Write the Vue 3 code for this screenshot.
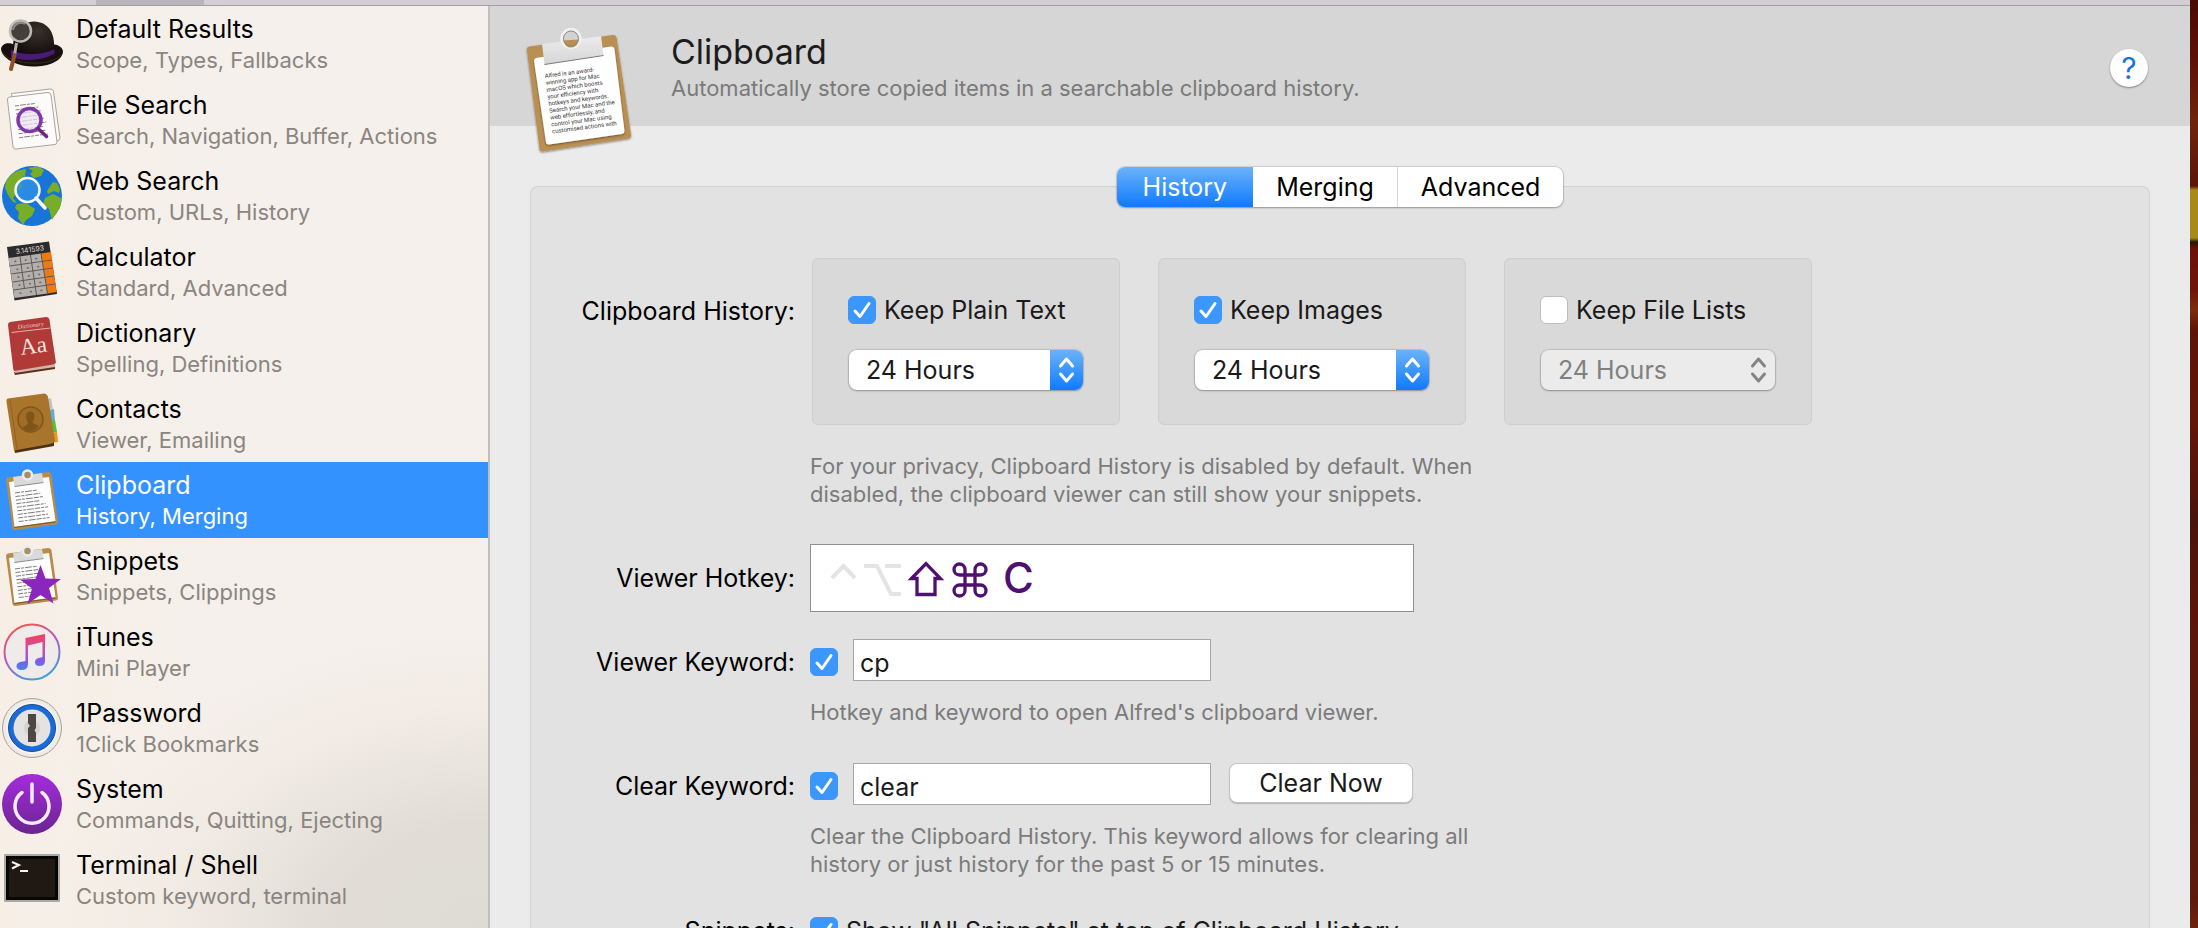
<script setup>
import { ref } from 'vue'

const sections = [
  { id: 'default', title: 'Default Results', detail: 'Scope, Types, Fallbacks' },
  { id: 'file', title: 'File Search', detail: 'Search, Navigation, Buffer, Actions' },
  { id: 'web', title: 'Web Search', detail: 'Custom, URLs, History' },
  { id: 'calculator', title: 'Calculator', detail: 'Standard, Advanced' },
  { id: 'dictionary', title: 'Dictionary', detail: 'Spelling, Definitions' },
  { id: 'contacts', title: 'Contacts', detail: 'Viewer, Emailing' },
  { id: 'clipboard', title: 'Clipboard', detail: 'History, Merging' },
  { id: 'snippets', title: 'Snippets', detail: 'Snippets, Clippings' },
  { id: 'itunes', title: 'iTunes', detail: 'Mini Player' },
  { id: 'password', title: '1Password', detail: '1Click Bookmarks' },
  { id: 'system', title: 'System', detail: 'Commands, Quitting, Ejecting' },
  { id: 'terminal', title: 'Terminal / Shell', detail: 'Custom keyword, terminal' },
]
const current = ref('clipboard')

const tabs = ['History', 'Merging', 'Advanced']
const activeTab = ref('History')

const stores = ref([
  { id: 'text', label: 'Keep Plain Text', on: true, period: '24 Hours' },
  { id: 'images', label: 'Keep Images', on: true, period: '24 Hours' },
  { id: 'files', label: 'Keep File Lists', on: false, period: '24 Hours' },
])
const periods = ['24 Hours', '7 Days', '1 Month', '3 Months']

const viewerOn = ref(true)
const viewerKeyword = ref('cp')
const clearOn = ref(true)
const clearKeyword = ref('clear')
const snippetsOn = ref(true)

const note = [
  'Alfred is an award-',
  'winning app for Mac',
  'macOS which boosts',
  'your efficiency with',
  'hotkeys and keywords.',
  'Search your Mac and the',
  'web effortlessly, and',
  'control your Mac using',
  'customised actions with',
]
const lineWidths = [22, 25, 27, 24, 29, 31, 27, 30, 31]
</script>

<template>
  <div class="desktop">
    <div class="window">
      <div class="toolbar"><span class="toolbar-item"></span></div>
      <div class="body">
        <nav class="sidebar">
          <a
            v-for="s in sections"
            :key="s.id"
            href="#"
            class="row"
            :class="{ selected: s.id === current }"
            @click.prevent="current = s.id"
          >
            <svg class="icon" viewBox="0 0 64 64" aria-hidden="true">
              <g v-if="s.id === 'default'">
                <defs>
                  <radialGradient id="crown" cx="0.6" cy="0.3" r="0.8">
                    <stop offset="0" stop-color="#3a302a" /><stop offset="1" stop-color="#0c0908" />
                  </radialGradient>
                </defs>
                <path d="M1 37C2 31 9 30 15 33L52 32C60 33 63 36 63 40C62 49 48 55 32 54.500C15 54 2 46 1 37Z" fill="#17100e" />
                <path d="M13 40C12 20 20 10 34 9.500C48 10 55 20 54 37C46 44 22 46 13 40Z" fill="url(#crown)" />
                <path d="M11 38C22 44 44 43 54 37L55 41C44 49 22 50 11 45Z" fill="#4a1a78" />
                <path d="M3 41C10 52 50 56 61 43" fill="none" stroke="#3c2a22" stroke-width="1" />
                <path d="M16.500 31L14 46" stroke="#b9b2ab" stroke-width="3" />
                <path d="M14.500 43L11 57" stroke="#92511f" stroke-width="4" stroke-linecap="round" />
                <circle cx="20.500" cy="19" r="10.500" fill="#453f3b" stroke="#bdbab8" stroke-width="2.500" />
                <path d="M13 18A8 8 0 0 1 25 12" fill="none" stroke="#8f8b88" stroke-width="2" />
              </g>
              <g v-else-if="s.id === 'file'">
                <path d="M11.500 5.500L50 1Q53 .5 53.500 3.500L60 50Q60 52 58 52.500L19 58Z" fill="#fbf8f6" stroke="#a9a3a0" stroke-width="1" />
                <path d="M9.500 9L48 4.500Q50.500 4.500 51 7L57 54Q57 56 55 56.500L16 61Q13.500 61.500 13 59L7.500 12Q7 9.500 9.500 9Z" fill="#fdfbfa" stroke="#a9a3a0" stroke-width="1" />
                <g transform="translate(15 18) rotate(-7.500)" stroke="#8a8382" stroke-width="1">
                  <path v-for="(w, i) in lineWidths" :key="i" :d="`M${0} ${i * 4}H${w - 2}`" stroke-dasharray="4 1 6 1 3 1" />
                </g>
                <circle cx="29.500" cy="32" r="11.500" fill="#ede2f2" fill-opacity=".7" stroke="#8038a8" stroke-width="3.500" />
                <path d="M38 40.500L46.500 48.500" stroke="#6b2684" stroke-width="3.500" stroke-linecap="round" />
              </g>
              <g v-else-if="s.id === 'web'">
                <circle cx="32" cy="32" r="30" fill="#1974d8" />
                <path d="M6 17Q11 9 20 6L25 8L22 12L28 14L20 19L23 23L17 28L13 34L17 39L13 38L8 31L5 24Z" fill="#78ae27" />
                <path d="M28 4L38 2.500L44 6L41 12L34 14L30 10L33 7ZM21 6L26 5L25 13L21 11Z" fill="#78ae27" />
                <path d="M17 40L26 39L35 45L32 52L26 56L23 61L18 54L19 48L15 44Z" fill="#78ae27" />
                <path d="M47 27L53 18L57 19L60 25L59 29L54 27L48 30ZM45 34L53 30L61 34Q62 43 57 48L52 56L49 45L43 40Z" fill="#78ae27" />
                <circle cx="27.500" cy="26" r="12" fill="#2d91e5" fill-opacity=".8" stroke="#f8fafc" stroke-width="2.500" />
                <path d="M36 34L45 44" stroke="#f8fafc" stroke-width="3.500" stroke-linecap="round" />
              </g>
              <g v-else-if="s.id === 'calculator'">
                <path d="M7 7L49 1.500L57 54L14.500 60.500Z" fill="#2c2a2a" />
                <path d="M8.500 18L41 13.500L47.500 53.500L14.500 58Z" fill="#b3afad" />
                <path d="M41 13.500L51 12L56.500 52L47.500 53.500Z" fill="#f07a10" />
                <g stroke="#5f5a58" stroke-width="1">
                  <path d="M9.500 26L52 20M11 34L53 28M12.500 42L54 36M13.500 50L55 44" />
                  <path d="M20 16.500L24.500 49M30.500 15L36.500 55M41 13.500L47.500 53.500" />
                </g>
                <g transform="translate(11 19) rotate(-7.500)" stroke="#6b6664" stroke-width="1.500" stroke-dasharray="2 8.500">
                  <path d="M3 3H32M4 11H32M4 19H32M4 27H32M4 35H32" />
                </g>
                <text x="16" y="14" transform="rotate(-7.500 16 14)" class="digits">3.141593</text>
              </g>
              <g v-else-if="s.id === 'dictionary'">
                <path d="M14 56L55 48V53L15 59Z" fill="#5d2c22" />
                <path d="M14 54L55 47.500V51L15 57Z" fill="#cfb7a4" />
                <path d="M10 6L46 1Q49 1 49.500 4L56 47Q53 49 50 49L14 55Q13 53 13 51L8 9Q8 6.500 10 6Z" fill="#b03a38" />
                <path d="M11.500 16.500L50.500 12" stroke="#e3b3aa" stroke-width="1" />
                <text x="18" y="13" transform="rotate(-7.500 18 13)" class="book-name">Dictionary</text>
                <text x="21" y="39" transform="rotate(-7.500 21 39)" class="book-aa">Aa</text>
              </g>
              <g v-else-if="s.id === 'contacts'">
                <path d="M46 7L51 6L53 18L47 19Z" fill="#c2c0bd" />
                <path d="M48 19L54 17L55 29L49 30Z" fill="#63aecb" />
                <path d="M49 30L55 28L57 40L50 41Z" fill="#55bf42" />
                <path d="M50 41L57 40L58 50L52 51Z" fill="#e9951d" />
                <path d="M14 57L54 50V54L15 61Z" fill="#4c3213" />
                <path d="M8 6.500L44 1.500Q47 1.500 48 5L55 49Q53 52 50 52L14 58.500L6.500 10Q6 7 8 6.500Z" fill="#a9752c" />
                <path d="M10 7L17 57" stroke="#936222" stroke-width="1" />
                <circle cx="30.500" cy="27.500" r="12.500" fill="#a06c26" stroke="#80551c" stroke-width="1.500" />
                <path d="M30 19.500Q34.500 19.500 34.500 24Q34.500 28 32.500 29.500Q33 32 39 33.500Q35 39 30.500 39Q25 39 22.500 35Q28 33 28 30.500Q26 28 26 24Q26 20 30 19.500Z" fill="#80551c" />
              </g>
              <g v-else-if="s.id === 'clipboard' || s.id === 'snippets'">
                <path d="M8 9.500L48 4Q51 4 51.500 6.500L58 54Q58 56 56 56.500L15 62Q13 62 12.500 60L6 12Q6 10 8 9.500Z" fill="#b88b4a" />
                <path d="M9 14L49 9L55.500 53L14.500 59Z" fill="#fdfdfd" />
                <path d="M14 59.500L55.500 54" stroke="#77572d" stroke-width="1" />
                <path d="M13 9L42 5L43.500 14L14.500 18.500Z" fill="#d9dadb" />
                <path d="M14.500 18.500L43.500 14.500" stroke="#8a8a8a" stroke-width="1" />
                <circle cx="27.500" cy="7" r="4.500" fill="#a98f66" stroke="#ececec" stroke-width="2.500" />
                <g transform="translate(15 25) rotate(-7.500)" stroke="#7d7d7d" stroke-width="1">
                  <path v-for="(w, i) in lineWidths" :key="i" :d="`M${0} ${i * 3.600}H${w}`" stroke-dasharray="5 1 3 1 7 1" />
                </g>
                <path
                  v-if="s.id === 'snippets'"
                  d="M40.500 21L45.500 34.500L61 35L49 44L53.500 59.500L40.500 51L27.500 60L32 44.500L20 35.500L35.500 35Z"
                  fill="#8b26bd"
                />
              </g>
              <g v-else-if="s.id === 'itunes'">
                <defs>
                  <linearGradient id="ring" x1="0.300" y1="0" x2="0.700" y2="1">
                    <stop offset="0" stop-color="#ef5a50" /><stop offset=".45" stop-color="#b55bc4" /><stop offset="1" stop-color="#38a5d6" />
                  </linearGradient>
                  <linearGradient id="note" gradientUnits="userSpaceOnUse" x1="34" y1="14" x2="34" y2="50">
                    <stop offset="0" stop-color="#f5405a" /><stop offset=".45" stop-color="#c650ae" /><stop offset=".75" stop-color="#7d5ce8" /><stop offset="1" stop-color="#4387ee" />
                  </linearGradient>
                </defs>
                <circle cx="32" cy="32" r="27.500" fill="#eeebea" stroke="url(#ring)" stroke-width="2" />
                <path
                  d="M25.500 18L45 14V41Q45 46 39.500 46Q35 46 35 42Q35 38 41 37.500L42.500 37V22L28 25.500V44Q28 50 21.500 50Q16.500 50 16.500 46Q16.500 42 23 41.500L25.500 41Z"
                  fill="url(#note)"
                />
              </g>
              <g v-else-if="s.id === 'password'">
                <circle cx="32" cy="32" r="29.500" fill="#eeeae5" stroke="#aaa39c" stroke-width="1" />
                <circle cx="32" cy="32" r="26" fill="#f4f1ee" />
                <circle cx="32" cy="32" r="21" fill="#e5e3e1" stroke="#1a6bd8" stroke-width="5" />
                <circle cx="32" cy="32" r="23.500" fill="none" stroke="#164a9a" stroke-width="1" />
                <circle cx="32" cy="32" r="8" fill="#d5d2cf" />
                <path d="M28 18H36V32L34.500 34L36 37V46H28V32L30 30L28 27Z" fill="#4c4743" />
              </g>
              <g v-else-if="s.id === 'system'">
                <defs>
                  <linearGradient id="power" x1="0" y1="0" x2="0" y2="1">
                    <stop offset="0" stop-color="#a62bdc" /><stop offset="1" stop-color="#6a2590" />
                  </linearGradient>
                </defs>
                <circle cx="32" cy="32" r="30" fill="url(#power)" />
                <path d="M22 20.500A17 17 0 1 0 42 20.500M32 12V30" fill="none" stroke="#f5ecf8" stroke-width="3.500" stroke-linecap="round" />
              </g>
              <g v-else>
                <rect x="4" y="6" width="56" height="48" rx="1" fill="#a7aaa5" />
                <rect x="6" y="8" width="52" height="44" fill="#080706" />
                <rect x="9" y="11" width="46" height="38" fill="#1f1813" />
                <path d="M12 14L19 17L12 20.500" fill="none" stroke="#f6f6f6" stroke-width="2" />
                <path d="M20 23H28" stroke="#f6f6f6" stroke-width="2" />
              </g>
            </svg>
            <span class="row-text">
              <span class="row-title">{{ s.title }}</span>
              <span class="row-detail">{{ s.detail }}</span>
            </span>
          </a>
        </nav>

        <main class="main">
          <header class="header">
            <svg class="header-icon" viewBox="0 0 120 140" aria-hidden="true">
              <defs>
                <linearGradient id="plate" x1="0" y1="0" x2="0" y2="1">
                  <stop offset="0" stop-color="#ececec" /><stop offset="1" stop-color="#d6d6d6" />
                </linearGradient>
                <filter id="shade" x="-10%" y="-10%" width="120%" height="120%">
                  <feDropShadow dx="0" dy="1" stdDeviation="1.200" flood-color="#000" flood-opacity=".45" />
                </filter>
              </defs>
              <path d="M9.500 26.500L93 15Q96 14.500 96.500 17.500L111 115Q111 118 108.500 118.500L23 131.500Q20 132 19.500 129L7 30Q6.500 27 9.500 26.500Z" fill="#b98f52" filter="url(#shade)" />
              <path d="M16 38L91 26.500Q94 26 94.500 29L104.500 111Q104.500 113.500 102 114L29 124.500Q26.500 125 26 122.500L14 41Q14 38.500 16 38Z" fill="#fff" filter="url(#shade)" />
              <path d="M22 24L81 16L83.500 35L24.500 44.500Z" fill="url(#plate)" />
              <path d="M24.500 44.500L83.500 35.500" stroke="#777" stroke-width="1" />
              <circle cx="51" cy="18.500" r="9" fill="#d2d2d2" stroke="#f0f0f0" stroke-width="3.500" />
              <path d="M43.500 20.500L58.500 19.500A7.500 7.500 0 0 1 43.500 20.500Z" fill="#b98f52" />
              <circle cx="51" cy="18.500" r="7.500" fill="none" stroke="#858585" stroke-width="1" />
              <g transform="translate(25 58) rotate(-7.500)" class="note-text">
                <text v-for="(line, i) in note" :key="i" x="0" :y="i * 7">{{ line }}</text>
              </g>
            </svg>
            <div class="heading">
              <h1>Clipboard</h1>
              <p>Automatically store copied items in a searchable clipboard history.</p>
            </div>
            <button type="button" class="help" aria-label="Help">?</button>
          </header>

          <section class="panel">
            <div class="tabs" role="tablist">
              <button
                v-for="t in tabs"
                :key="t"
                type="button"
                role="tab"
                :aria-selected="t === activeTab"
                :class="{ active: t === activeTab }"
                @click="activeTab = t"
              >{{ t }}</button>
            </div>

            <form class="form" @submit.prevent>
              <div class="field history">
                <span class="label">Clipboard History:</span>
                <div class="cards">
                  <div v-for="c in stores" :key="c.id" class="card">
                    <label class="check">
                      <span class="box"><input v-model="c.on" type="checkbox" /><svg viewBox="0 0 28 28" aria-hidden="true"><path d="M7 15L12 20.500L21 7.500" /></svg></span>
                      {{ c.label }}
                    </label>
                    <div class="select" :class="{ off: !c.on }">
                      <select v-model="c.period" :disabled="!c.on" :aria-label="c.label + ' for'">
                        <option v-for="p in periods" :key="p">{{ p }}</option>
                      </select>
                      <svg viewBox="0 0 32 40" aria-hidden="true"><path d="M10 16L16 9L22 16M10 24L16 31L22 24" /></svg>
                    </div>
                  </div>
                </div>
              </div>
              <p class="hint privacy">For your privacy, Clipboard History is disabled by default. When<br />disabled, the clipboard viewer can still show your snippets.</p>

              <div class="field hotkey-row">
                <span id="hotkey-label" class="label">Viewer Hotkey:</span>
                <button type="button" class="hotkey" aria-labelledby="hotkey-label">
                  <svg viewBox="0 0 160 40" aria-hidden="true">
                    <g fill="none" stroke="#e4e4e4" stroke-width="4">
                      <path d="M2 20L13.500 8L25 20" />
                      <path d="M34 8H47L61 36H71M55 8H71" />
                    </g>
                    <g fill="none" stroke="#50106f" stroke-width="3.300">
                      <path d="M81.500 20.500L96 5.500L110.500 20.500H105V36.500H87V20.500Z" />
                      <path d="M135 17V11.500A5.500 5.500 0 1 0 129.500 17H150.500A5.500 5.500 0 1 0 145 11.500V32.500A5.500 5.500 0 1 0 150.500 27H129.500A5.500 5.500 0 1 0 135 32.500Z" />
                    </g>
                  </svg>
                  <span>C</span>
                </button>
              </div>

              <div class="field keyword">
                <label class="label" for="viewer-keyword">Viewer Keyword:</label>
                <span class="box"><input v-model="viewerOn" type="checkbox" aria-label="Use viewer keyword" /><svg viewBox="0 0 28 28" aria-hidden="true"><path d="M7 15L12 20.500L21 7.500" /></svg></span>
                <input id="viewer-keyword" v-model="viewerKeyword" class="text" type="text" />
              </div>
              <p class="hint single">Hotkey and keyword to open Alfred's clipboard viewer.</p>

              <div class="field keyword">
                <label class="label" for="clear-keyword">Clear Keyword:</label>
                <span class="box"><input v-model="clearOn" type="checkbox" aria-label="Use clear keyword" /><svg viewBox="0 0 28 28" aria-hidden="true"><path d="M7 15L12 20.500L21 7.500" /></svg></span>
                <input id="clear-keyword" v-model="clearKeyword" class="text" type="text" />
                <button type="button" class="push">Clear Now</button>
              </div>
              <p class="hint clearing">Clear the Clipboard History. This keyword allows for clearing all<br />history or just history for the past 5 or 15 minutes.</p>

              <div class="field">
                <span class="label">Snippets:</span>
                <label class="check">
                  <span class="box"><input v-model="snippetsOn" type="checkbox" /><svg viewBox="0 0 28 28" aria-hidden="true"><path d="M7 15L12 20.500L21 7.500" /></svg></span>
                  Show "All Snippets" at top of Clipboard History
                </label>
              </div>
            </form>
          </section>
        </main>
      </div>
    </div>
    <div class="wallpaper"></div>
  </div>
</template>

<style>
body {
  margin: 0;
}
</style>

<style scoped>
* {
  box-sizing: border-box;
}
.desktop {
  display: flex;
  height: 100vh;
  overflow: hidden;
  font-family: Inter, Roboto, "Liberation Sans", sans-serif;
  font-size: 25px;
  line-height: 32px;
  color: #000;
}
button,
input,
select {
  font: inherit;
  color: inherit;
  margin: 0;
}
.window {
  flex: 1;
  min-width: 0;
  display: flex;
  flex-direction: column;
}
.wallpaper {
  width: 8px;
  background: linear-gradient(#4a0a04 0, #5e1008 60px, #6e240c 120px, #5c1508 186px, #a88a18 190px, #a88a18 238px, #241806 242px, #6c1009 248px, #6e1509 290px, #7c2c0d 310px, #5c1408 330px, #631509 420px, #4a140c 520px, #5c1409 620px, #521a10 780px, #5c1a0c 900px, #6e2410 100%);
}
.toolbar {
  flex: none;
  height: 6px;
  padding-left: 96px;
  background: #d2ced4;
  border-bottom: 1px solid #a39fa4;
}
.toolbar-item {
  display: block;
  width: 108px;
  height: 100%;
  background: #b8b5bb;
}
.body {
  flex: 1;
  min-height: 0;
  display: flex;
}
.sidebar {
  flex: none;
  width: 490px;
  border-right: 2px solid #bfbfc2;
  background: radial-gradient(ellipse 440px 300px at 100% 100%, #dddcd4 0, #e1ddd6 35%, rgba(240, 232, 224, 0.5) 75%, rgba(246, 240, 234, 0) 100%), linear-gradient(90deg, #f7efe6 0, #f5f0ec 50%, #f5f0ec 100%);
}
.row {
  display: flex;
  align-items: flex-start;
  gap: 12px;
  height: 76px;
  padding-top: 6px;
  color: #000;
  text-decoration: none;
}
.row.selected {
  background: #3492ff;
  color: #fff;
}
.icon {
  flex: none;
  width: 64px;
  height: 64px;
}
.row-text {
  display: flex;
  flex-direction: column;
}
.row-title {
  line-height: 34px;
}
.row-detail {
  font-size: 22px;
  line-height: 28px;
  color: #8a8580;
}
.selected .row-detail {
  color: #fff;
}
.digits {
  font-size: 7px;
  fill: #ddd;
}
.book-name {
  font-family: "Liberation Serif", serif;
  font-style: italic;
  font-size: 6px;
  fill: #f0d5cc;
}
.book-aa {
  font-family: "Liberation Serif", serif;
  font-size: 23px;
  fill: #f6e3dc;
}
.main {
  flex: 1;
  min-width: 0;
  display: flex;
  flex-direction: column;
  background: #ebebeb;
}
.header {
  flex: none;
  display: flex;
  align-items: flex-start;
  height: 120px;
  padding: 14px 42px 0 30px;
  background: #d6d6d6;
}
.header-icon {
  flex: none;
  width: 120px;
  height: 140px;
}
.note-text {
  font-family: Roboto, sans-serif;
  font-size: 6px;
  fill: #333;
}
.heading {
  flex: 1;
  margin-left: 31px;
}
h1 {
  margin: 10px 0 0;
  font-size: 34px;
  line-height: 44px;
  font-weight: 400;
  color: #1c1c1c;
}
.heading p {
  margin: 0;
  font-size: 22px;
  line-height: 28px;
  color: #7a7a7a;
}
.help {
  width: 38px;
  height: 38px;
  margin-top: 29px;
  padding: 0;
  border: 0;
  border-radius: 50%;
  background: #fff;
  box-shadow: 0 1px 2px rgba(0, 0, 0, 0.4);
  font-size: 30px;
  line-height: 38px;
  color: #1673e0;
}
.panel {
  flex: 1;
  min-height: 0;
  margin: 60px 40px 0;
  border: 1px solid #d2d2d2;
  border-bottom: 0;
  border-radius: 8px 8px 0 0;
  background: #e2e2e2;
}
.tabs {
  display: flex;
  width: max-content;
  height: 40px;
  margin: -20px auto 0;
  border-radius: 8px;
  background: #fff;
  box-shadow: 0 0 1px 1px rgba(0, 0, 0, 0.12), 0 1px 2px rgba(0, 0, 0, 0.25);
}
.tabs button {
  padding: 0 23px;
  border: 0;
  border-right: 1px solid #d8d8d8;
  background: transparent;
}
.tabs button:last-child {
  border-right: 0;
}
.tabs .active {
  padding: 0 26px;
  border-radius: 8px 0 0 8px;
  border-right: 0;
  background: linear-gradient(#6bb3fa, #0f7afd);
  color: #fff;
}
.form {
  padding: 51px 0 0 30px;
}
.field {
  display: flex;
  align-items: center;
}
.label {
  flex: none;
  width: 234px;
  margin-right: 15px;
  text-align: right;
}
.history {
  align-items: flex-start;
}
.history .label {
  padding-top: 37px;
}
.cards {
  display: flex;
  gap: 38px;
  margin-left: 2px;
}
.card {
  width: 308px;
  padding: 35px 36px 34px 35px;
  border: 1px solid #cecece;
  border-radius: 6px;
  background: #d9d9d9;
}
.check {
  display: flex;
  align-items: center;
  gap: 8px;
  color: #1a1a1a;
}
.box {
  flex: none;
  display: grid;
  width: 28px;
  height: 28px;
}
.box > * {
  grid-area: 1 / 1;
}
.box input {
  appearance: none;
  width: 28px;
  height: 28px;
  border: 1px solid #bdbdbd;
  border-radius: 6px;
  background: #fff;
}
.box input:checked {
  border-color: #3b97fb;
  background: #3b97fb;
}
.box svg {
  pointer-events: none;
  fill: none;
  stroke: none;
  stroke-width: 3;
  stroke-linecap: round;
  stroke-linejoin: round;
}
.box input:checked + svg {
  stroke: #fff;
}
.select {
  display: flex;
  height: 40px;
  margin-top: 24px;
  margin-left: 1px;
  border-radius: 8px;
  background: #fff;
  box-shadow: 0 0 1px 1px rgba(0, 0, 0, 0.12), 0 1px 2px rgba(0, 0, 0, 0.25);
}
.select select {
  flex: 1;
  min-width: 0;
  appearance: none;
  padding: 0 0 0 17px;
  border: 0;
  background: transparent;
  color: #1a1a1a;
  opacity: 1;
}
.select svg {
  flex: none;
  width: 33px;
  height: 40px;
  border-radius: 0 8px 8px 0;
  background: linear-gradient(#6bb3fa, #0f7afd);
  fill: none;
  stroke: #fff;
  stroke-width: 3;
  stroke-linecap: round;
  stroke-linejoin: round;
}
.select.off {
  background: #ebebeb;
}
.select.off select {
  color: #808080;
}
.select.off svg {
  background: none;
  stroke: #858585;
}
.hint {
  margin: 0 0 0 249px;
  font-size: 22px;
  line-height: 28px;
  color: #7b7b7b;
}
.privacy {
  padding: 27px 0 36px;
}
.hotkey {
  display: flex;
  align-items: center;
  width: 604px;
  height: 68px;
  padding: 0 0 0 19px;
  border: 1px solid #8f8f8f;
  background: #fff;
  color: #50106f;
  font-size: 42px;
  font-weight: 500;
}
.hotkey svg {
  width: 160px;
  height: 40px;
}
.hotkey span {
  margin-left: 13px;
}
.hotkey-row {
  margin-bottom: 27px;
}
.keyword .label,
.keyword .box {
  margin-top: 4px;
}
.text {
  width: 358px;
  height: 42px;
  margin-left: 15px;
  padding: 5px 6px 0;
  border: 1px solid #a6a6a6;
  border-radius: 0;
  background: #fff;
  color: #1a1a1a;
}
.push {
  align-self: flex-start;
  width: 184px;
  height: 40px;
  margin-left: 18px;
  padding: 0;
  border: 1px solid #c4c4c4;
  border-radius: 8px;
  background: #fff;
  box-shadow: 0 1px 1px rgba(0, 0, 0, 0.2);
  color: #1a1a1a;
}
.single {
  padding: 17px 0 37px;
}
.clearing {
  padding: 17px 0 37px;
}
</style>
